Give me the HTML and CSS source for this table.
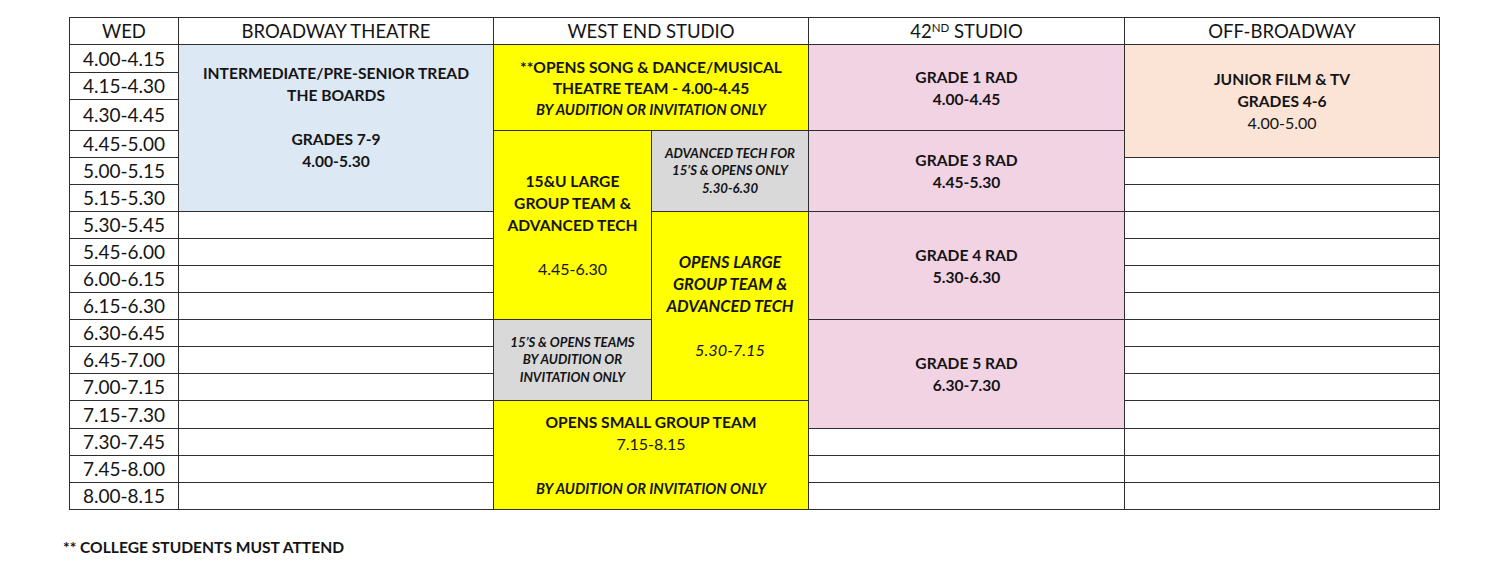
FILE: index.html
```html
<!DOCTYPE html>
<html lang="en">
<head>
<meta charset="utf-8">
<title>Wednesday Timetable</title>
<link rel="stylesheet" href="styles.css">
</head>
<body>
<main class="page">
  <table class="timetable">
    <colgroup>
      <col class="c-time">
      <col class="c-room">
      <col class="c-half">
      <col class="c-half2">
      <col class="c-room2">
      <col class="c-room3">
    </colgroup>
    <thead>
      <tr class="r-head">
        <th>WED</th>
        <th>BROADWAY THEATRE</th>
        <th colspan="2">WEST END STUDIO</th>
        <th>42<sup>ND</sup> STUDIO</th>
        <th>OFF-BROADWAY</th>
      </tr>
    </thead>
    <tbody>
      <tr class="r28">
        <td class="time">4.00-4.15</td>
        <td rowspan="6" class="blue b lift">INTERMEDIATE/PRE-SENIOR TREAD<br>THE BOARDS<br><br>GRADES 7-9<br>4.00-5.30</td>
        <td colspan="2" rowspan="3" class="yellow b opens">**OPENS SONG &amp; DANCE/MUSICAL<br>THEATRE TEAM - 4.00-4.45<br><span class="note-it bi">BY AUDITION OR INVITATION ONLY</span></td>
        <td rowspan="3" class="pink b">GRADE 1 RAD<br>4.00-4.45</td>
        <td rowspan="4" class="peach"><span class="b">JUNIOR FILM &amp; TV<br>GRADES 4-6</span><br><span class="reg">4.00-5.00</span></td>
      </tr>
      <tr class="r27"><td class="time">4.15-4.30</td></tr>
      <tr class="r31"><td class="time">4.30-4.45</td></tr>
      <tr class="r27">
        <td class="time">4.45-5.00</td>
        <td rowspan="7" class="yellow b">15&amp;U LARGE<br>GROUP TEAM &amp;<br>ADVANCED TECH<br><br><span class="reg">4.45-6.30</span></td>
        <td rowspan="3" class="grey small bi tight">ADVANCED TECH FOR<br>15’S &amp; OPENS ONLY<br>5.30-6.30</td>
        <td rowspan="3" class="pink b">GRADE 3 RAD<br>4.45-5.30</td>
      </tr>
      <tr class="r27"><td class="time">5.00-5.15</td><td></td></tr>
      <tr class="r27"><td class="time">5.15-5.30</td><td></td></tr>
      <tr class="r27">
        <td class="time">5.30-5.45</td>
        <td></td>
        <td rowspan="7" class="yellow bi big">OPENS LARGE<br>GROUP TEAM &amp;<br>ADVANCED TECH<br><br><span class="it">5.30-7.15</span></td>
        <td rowspan="4" class="pink b">GRADE 4 RAD<br>5.30-6.30</td>
        <td></td>
      </tr>
      <tr class="r27"><td class="time">5.45-6.00</td><td></td><td></td></tr>
      <tr class="r27"><td class="time">6.00-6.15</td><td></td><td></td></tr>
      <tr class="r27"><td class="time">6.15-6.30</td><td></td><td></td></tr>
      <tr class="r27">
        <td class="time">6.30-6.45</td>
        <td></td>
        <td rowspan="3" class="grey small bi tight">15’S &amp; OPENS TEAMS<br>BY AUDITION OR<br>INVITATION ONLY</td>
        <td rowspan="4" class="pink b">GRADE 5 RAD<br>6.30-7.30</td>
        <td></td>
      </tr>
      <tr class="r27"><td class="time">6.45-7.00</td><td></td><td></td></tr>
      <tr class="r27"><td class="time">7.00-7.15</td><td></td><td></td></tr>
      <tr class="r28">
        <td class="time">7.15-7.30</td>
        <td></td>
        <td colspan="2" rowspan="4" class="yellow"><span class="b">OPENS SMALL GROUP TEAM</span><br><span class="reg">7.15-8.15</span><br><br><span class="note-it bi">BY AUDITION OR INVITATION ONLY</span></td>
        <td></td>
      </tr>
      <tr class="r27"><td class="time">7.30-7.45</td><td></td><td></td><td></td></tr>
      <tr class="r27"><td class="time">7.45-8.00</td><td></td><td></td><td></td></tr>
      <tr class="r27"><td class="time">8.00-8.15</td><td></td><td></td><td></td></tr>
    </tbody>
  </table>
  <p class="note">** COLLEGE STUDENTS MUST ATTEND</p>
</main>
</body>
</html>
```

FILE: styles.css
```css
html, body {
  margin: 0;
  padding: 0;
  background: #ffffff;
}

body {
  font-family: Lato, "Open Sans", "Liberation Sans", sans-serif;
  color: #141414;
}

.page {
  padding: 17px 0 0 69px;
}

.timetable {
  border-collapse: collapse;
  table-layout: fixed;
  width: 1370px;
}

.c-time { width: 109px; }
.c-room { width: 315px; }
.c-half { width: 158px; }
.c-half2 { width: 157px; }
.c-room2 { width: 316px; }
.c-room3 { width: 315px; }

.timetable th,
.timetable td {
  border: 1px solid #2e2e2e;
  padding: 0;
  text-align: center;
  vertical-align: middle;
}

.timetable th {
  font-weight: 400;
  font-size: 18.5px;
  line-height: 20px;
}

.timetable sup {
  font-size: 11.5px;
  line-height: 0;
  vertical-align: 6px;
}

.r-head { height: 27px; }
.r27 { height: 27px; }
.r28 { height: 28px; }
.r31 { height: 31px; }

.time {
  font-size: 19px;
  line-height: 20px;
}

.blue, .yellow, .pink, .peach, .grey {
  font-size: 15.6px;
  line-height: 22px;
}

.blue { background: #dde8f5; }
.yellow { background: #ffff00; }
.pink { background: #f2d3e4; }
.peach { background: #fbe3d6; }
.grey { background: #d9d9d9; }

.b { font-weight: 700; }
.bi { font-weight: 700; font-style: italic; }
.it { font-style: italic; font-weight: 400; font-size: 16.3px; }
.reg { font-weight: 400; font-size: 16px; }

.big { font-size: 16.4px; }

.timetable .lift {
  padding-bottom: 22px;
}

.small {
  font-size: 13.2px;
}

.note-it {
  font-size: 14.6px;
}

.tight {
  line-height: 17.5px;
}

.timetable .opens {
  line-height: 21px;
  padding-top: 2px;
}

.note {
  margin: 28px 0 0 -6px;
  font-size: 15.6px;
  font-weight: 700;
  line-height: 18px;
}
```
